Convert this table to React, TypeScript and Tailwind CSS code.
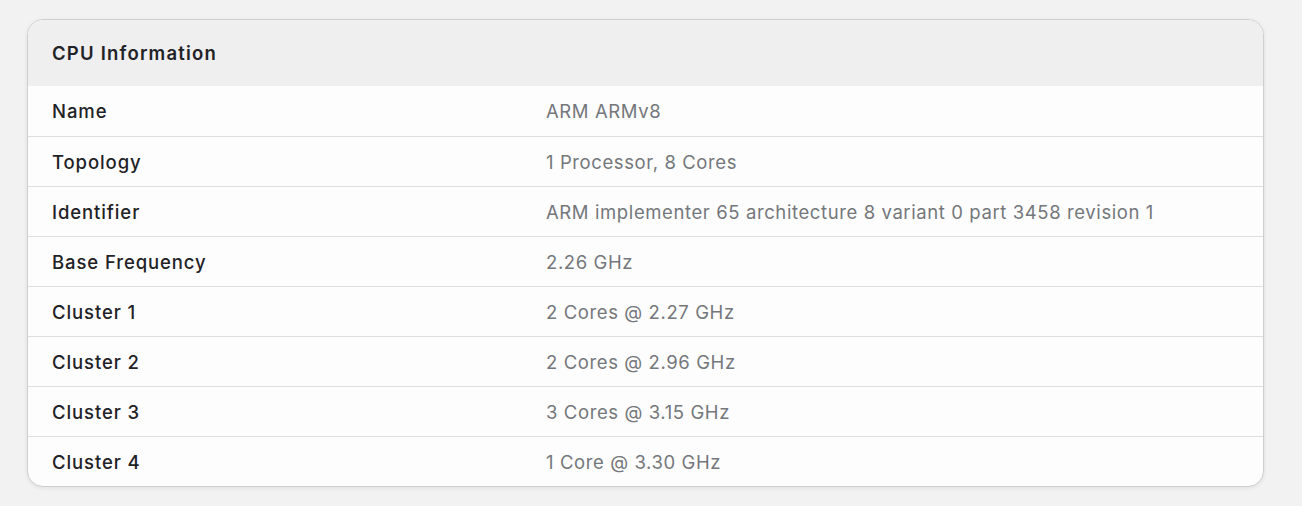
const rows: [string, string][] = [
  ["Name", "ARM ARMv8"],
  ["Topology", "1 Processor, 8 Cores"],
  ["Identifier", "ARM implementer 65 architecture 8 variant 0 part 3458 revision 1"],
  ["Base Frequency", "2.26 GHz"],
  ["Cluster 1", "2 Cores @ 2.27 GHz"],
  ["Cluster 2", "2 Cores @ 2.96 GHz"],
  ["Cluster 3", "3 Cores @ 3.15 GHz"],
  ["Cluster 4", "1 Core @ 3.30 GHz"],
]

export default function App() {
  return (
    <div
      className="min-h-[506px] bg-[#f2f2f2] pt-[19px] pl-[27px]"
      style={{ fontFamily: 'Inter, "Liberation Sans", Arial, sans-serif' }}
    >
      <div className="w-[1237px] overflow-hidden rounded-[16px] border border-[#cfcfcf] bg-[#fdfdfd] shadow-[0_1px_4px_rgba(0,0,0,0.08)]">
        {/* Header */}
        <div className="flex h-[66px] items-center bg-[#efefef] px-6 pt-[2px] text-[18.5px] font-semibold tracking-[1.2px] text-[#1f2226]">
          CPU Information
        </div>
        {rows.map(([label, value], i) => (
          <div
            key={label}
            className={`flex h-[50px] items-center px-6 pt-[2px] text-[18.5px] ${i > 0 ? "border-t border-[#dedede]" : ""}`}
          >
            <div className="w-[494px] shrink-0 font-medium tracking-[0.9px] text-[#1f2226]">{label}</div>
            <div className="tracking-[0.6px] text-[#74777b]">{value}</div>
          </div>
        ))}
      </div>
    </div>
  )
}
